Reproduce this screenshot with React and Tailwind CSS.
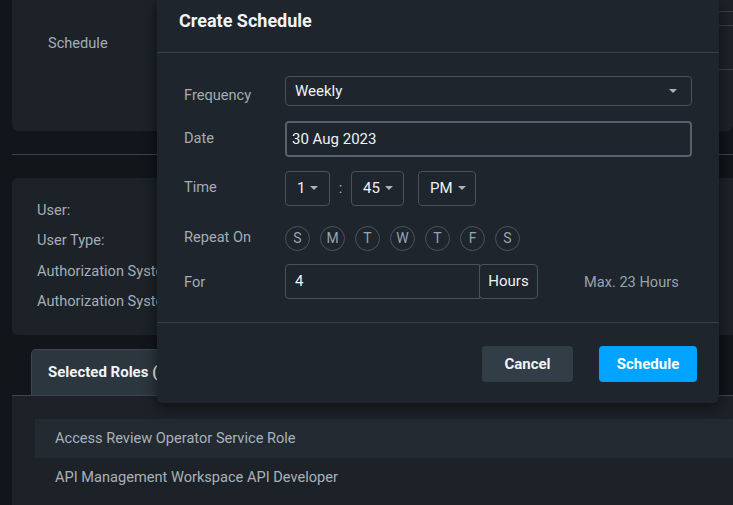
import { useState } from 'react';

const days = ['S', 'M', 'T', 'W', 'T', 'F', 'S'];

function Caret({ className = '' }) {
    return (
        <svg width="8" height="4" viewBox="0 0 8 4" className={className}>
            <path d="M0 0h8L4 4z" fill="#a9b3bc" />
        </svg>
    );
}

function TimeBox({ value, width }) {
    return (
        <div className={`${width} h-[35px] flex items-center gap-[5px] pl-[11px] border border-[#46525d] rounded-[4px] text-[15px] text-[#eef2f5]`}>
            <span>{value}</span>
            <Caret />
        </div>
    );
}

function Row({ label, children, className = '', labelClass = '' }) {
    return (
        <div className={`flex items-center ${className}`}>
            <div className={`w-[101px] shrink-0 text-[14.6px] text-[#a3adb6] ${labelClass}`}>{label}</div>
            {children}
        </div>
    );
}

export default function App() {
    const [active] = useState('Selected Roles (2)');

    return (
        <div className="relative h-[505px] w-[733px] overflow-hidden bg-[#121519] font-['Roboto',sans-serif]">
            {/* page behind the modal */}
            <div className="pl-3">
                <div className="h-[131px] bg-[#1c2228] rounded-b-[6px] flex">
                    <div className="w-[300px] pl-9 pt-[33px] text-[14.6px] text-[#a5aeb6]">Schedule</div>
                    <div className="flex-1 pl-[400px]">
                        <div className="h-[12px] border-b border-[#39424a]" />
                        <div className="h-[14px] border-b border-[#39424a]" />
                        <div className="h-[44px] border-b border-[#39424a]" />
                    </div>
                </div>
                <div className="mt-[23px] h-[1px] bg-[#3a444c]" />
                <div className="mt-[23px] h-[157px] bg-[#1c2228] rounded-l-[6px] pl-[25px] pt-[17px] text-[14.6px] text-[#a5aeb6] leading-[30.4px]">
                    <div>User:</div>
                    <div>User Type:</div>
                    <div>Authorization System Type:</div>
                    <div>Authorization System:</div>
                </div>
                <div className="mt-[14px] pl-[19px] flex">
                    <div className="h-[46px] w-[180px] bg-[#2c363f] border border-b-0 border-[#3d4851] rounded-t-[5px] pl-4 flex items-center text-[15px] font-bold text-[#f1f4f6]">
                        {active}
                    </div>
                </div>
                <div className="h-[120px] bg-[#1c2228] border-t border-[#3c4650] pt-[23px] pl-[23px]">
                    <div className="h-[39px] bg-[#232a31] pl-5 flex items-center text-[14.6px] text-[#a9b2ba]">
                        Access Review Operator Service Role
                    </div>
                    <div className="h-[39px] pl-5 flex items-center text-[14.6px] text-[#a9b2ba]">
                        API Management Workspace API Developer
                    </div>
                </div>
            </div>

            {/* modal */}
            <div className="absolute left-[157px] top-0 w-[562px] h-[403px] bg-[#1e252c] rounded-b-[6px] shadow-[0_4px_14px_rgba(0,0,0,0.55)] flex flex-col">
                <div className="h-[53px] border-b border-[#35404a] pl-[22px] pt-[10px] text-[18px] leading-[22px] font-bold text-[#f1f4f6]">
                    Create Schedule
                </div>
                <div className="flex-1 px-[27px] pt-[23px]">
                    <Row label="Frequency" labelClass="pt-[9px]">
                        <div className="flex-1 h-[30px] flex items-center justify-between pl-[9px] pr-[14px] border border-[#46525d] rounded-[4px] text-[15px] text-[#eef2f5]">
                            <span>Weekly</span>
                            <Caret />
                        </div>
                    </Row>
                    <Row label="Date" className="mt-[14px]">
                        <div className="flex-1 h-[36px] flex items-center pl-[5px] border-2 border-[#55616c] rounded-[4px] text-[15px] text-[#eef2f5]">
                            30 Aug 2023
                        </div>
                    </Row>
                    <Row label="Time" className="mt-[14px]">
                        <TimeBox value="1" width="w-[45px]" />
                        <span className="w-[21px] text-center text-[15px] text-[#a3adb6]">:</span>
                        <TimeBox value="45" width="w-[53px]" />
                        <div className="w-[14px]" />
                        <TimeBox value="PM" width="w-[58px]" />
                    </Row>
                    <Row label="Repeat On" className="mt-[20px]">
                        <div className="flex gap-[10px]">
                            {days.map((d, i) => (
                                <div key={i} className="w-[25px] h-[25px] rounded-full border border-[#4a5560] flex items-center justify-center text-[14px] text-[#9aa4ad]">
                                    {d}
                                </div>
                            ))}
                        </div>
                    </Row>
                    <Row label="For" className="mt-[13px]" labelClass="pt-[3px]">
                        <div className="w-[195px] h-[35px] flex items-center pl-[9px] border border-[#46525d] rounded-l-[4px] text-[15px] text-[#eef2f5]">
                            4
                        </div>
                        <div className="w-[59px] h-[35px] -ml-px flex items-center justify-center border border-[#46525d] rounded-[4px] text-[15px] text-[#eef2f5]">
                            Hours
                        </div>
                        <div className="ml-[46px] pt-[3px] text-[14.6px] text-[#9aa3ab]">Max. 23 Hours</div>
                    </Row>
                </div>
                <div className="h-[81px] border-t border-[#35404a] flex justify-end items-start pt-[23px] pr-[22px] gap-[26px]">
                    <button className="w-[91px] h-[36px] rounded-[4px] bg-[#313d47] text-[15px] font-bold text-[#f1f4f6]">Cancel</button>
                    <button className="w-[98px] h-[36px] rounded-[4px] bg-[#00a3ff] text-[15px] font-bold text-white">Schedule</button>
                </div>
            </div>
        </div>
    );
}
